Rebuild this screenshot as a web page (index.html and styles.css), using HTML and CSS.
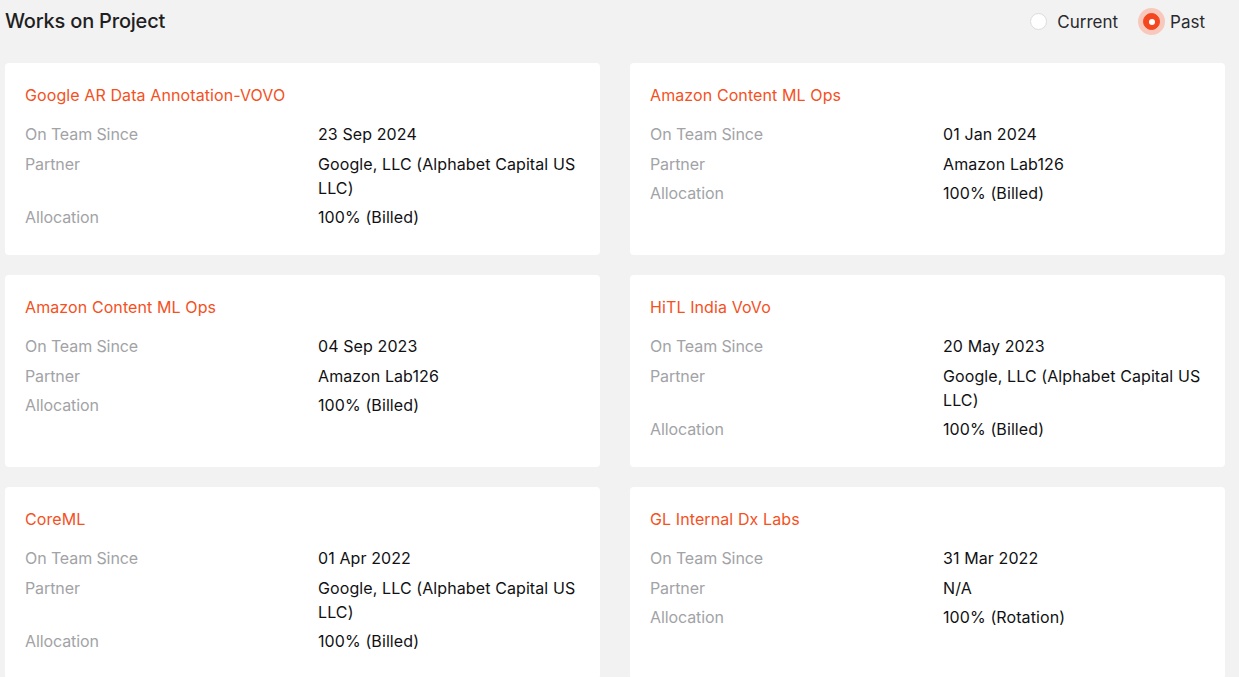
FILE: index.html
```html
<!DOCTYPE html>
<html lang="en">
<head>
<meta charset="utf-8">
<title>Works on Project</title>
<link rel="stylesheet" href="styles.css">
</head>
<body>
<div class="page">
  <header class="header">
    <h1 class="title">Works on Project</h1>
    <div class="radios">
      <label class="radio"><span class="dot"></span><span class="radio-label">Current</span></label>
      <label class="radio radio-on"><span class="dot"></span><span class="radio-label">Past</span></label>
    </div>
  </header>
  <div class="grid">
    <section class="card">
      <h2 class="card-title">Google AR Data Annotation-VOVO</h2>
      <dl class="rows">
        <dt>On Team Since</dt><dd>23 Sep 2024</dd>
        <dt>Partner</dt><dd>Google, LLC (Alphabet Capital US LLC)</dd>
        <dt>Allocation</dt><dd>100% (Billed)</dd>
      </dl>
    </section>
    <section class="card">
      <h2 class="card-title">Amazon Content ML Ops</h2>
      <dl class="rows">
        <dt>On Team Since</dt><dd>01 Jan 2024</dd>
        <dt>Partner</dt><dd>Amazon Lab126</dd>
        <dt>Allocation</dt><dd>100% (Billed)</dd>
      </dl>
    </section>
    <section class="card">
      <h2 class="card-title">Amazon Content ML Ops</h2>
      <dl class="rows">
        <dt>On Team Since</dt><dd>04 Sep 2023</dd>
        <dt>Partner</dt><dd>Amazon Lab126</dd>
        <dt>Allocation</dt><dd>100% (Billed)</dd>
      </dl>
    </section>
    <section class="card">
      <h2 class="card-title">HiTL India VoVo</h2>
      <dl class="rows">
        <dt>On Team Since</dt><dd>20 May 2023</dd>
        <dt>Partner</dt><dd>Google, LLC (Alphabet Capital US LLC)</dd>
        <dt>Allocation</dt><dd>100% (Billed)</dd>
      </dl>
    </section>
    <section class="card">
      <h2 class="card-title">CoreML</h2>
      <dl class="rows">
        <dt>On Team Since</dt><dd>01 Apr 2022</dd>
        <dt>Partner</dt><dd>Google, LLC (Alphabet Capital US LLC)</dd>
        <dt>Allocation</dt><dd>100% (Billed)</dd>
      </dl>
    </section>
    <section class="card">
      <h2 class="card-title">GL Internal Dx Labs</h2>
      <dl class="rows">
        <dt>On Team Since</dt><dd>31 Mar 2022</dd>
        <dt>Partner</dt><dd>N/A</dd>
        <dt>Allocation</dt><dd>100% (Rotation)</dd>
      </dl>
    </section>
  </div>
</div>
</body>
</html>
```

FILE: styles.css
```css
* { box-sizing: border-box; }
html, body { margin: 0; padding: 0; }
body {
  background: #f2f2f2;
  font-family: Inter, "Noto Sans", "Liberation Sans", sans-serif;
  color: #1c1c1e;
}
.page {
  padding: 0 14px 0 5px;
}
.header {
  height: 42px;
  display: flex;
  align-items: center;
  justify-content: space-between;
  margin-bottom: 21px;
}
.title {
  margin: 0;
  font-size: 20px;
  font-weight: 500;
  color: #1f1f23;
  letter-spacing: -0.2px;
}
.radios {
  display: flex;
  align-items: center;
  gap: 25px;
  padding-right: 20px;
}
.radio {
  display: flex;
  align-items: center;
  gap: 10px;
  font-size: 17px;
  line-height: 22px;
  padding-top: 1px;
  color: #2a2a2e;
}
.dot {
  width: 17px;
  height: 17px;
  border-radius: 50%;
  background: #fff;
  border: 1px solid #dcdcdc;
  position: relative;
}
.radio-on .dot {
  background: #f4461f;
  border-color: #f4461f;
  box-shadow: 0 0 0 5px #f8c8bc;
}
.radio-on .dot::after {
  content: "";
  position: absolute;
  left: 50%;
  top: 50%;
  width: 6px;
  height: 6px;
  margin: -3px 0 0 -3px;
  border-radius: 50%;
  background: #fff;
}
.grid {
  display: grid;
  grid-template-columns: 1fr 1fr;
  column-gap: 30px;
  row-gap: 20px;
}
.card {
  background: #fff;
  border-radius: 4px;
  padding: 20px 20px 26px;
}
.card-title {
  margin: 0 0 15px;
  font-size: 16px;
  line-height: 24px;
  font-weight: 400;
  color: #f4511e;
  letter-spacing: 0.1px;
}
.rows {
  margin: 0;
  display: grid;
  grid-template-columns: 293px 1fr;
  row-gap: 5.5px;
  font-size: 16px;
  line-height: 24px;
}
.rows dt {
  color: #a2a3a6;
  letter-spacing: -0.1px;
}
.rows dd {
  margin: 0;
  color: #111113;
  font-weight: 400;
  letter-spacing: 0.1px;
}
```
